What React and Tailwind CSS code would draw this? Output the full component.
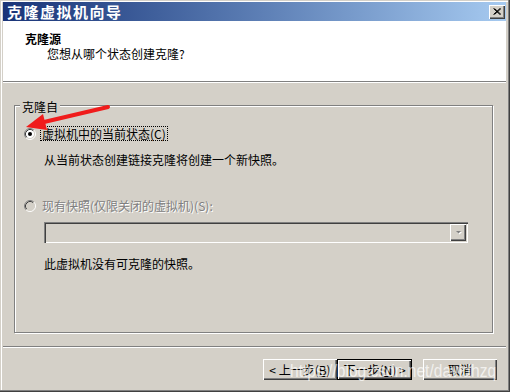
import React from 'react'

const FONT = "font-['Noto_Sans_CJK_SC','Microsoft_YaHei',sans-serif]"

// classic 12px radio button
const Radio = ({ checked, disabled }) => (
    <svg width="12" height="12" viewBox="0 0 12 12" className="shrink-0">
        <circle cx="6" cy="6" r="4.5" fill={disabled ? '#d4d0c8' : '#fff'} />
        <path d="M2.11 9.89 A5.5 5.5 0 0 1 9.89 2.11" stroke="#808080" fill="none" />
        <path d="M9.89 2.11 A5.5 5.5 0 0 1 2.11 9.89" stroke="#fff" fill="none" />
        <path d="M2.82 9.18 A4.5 4.5 0 0 1 9.18 2.82" stroke="#404040" fill="none" />
        <path d="M9.18 2.82 A4.5 4.5 0 0 1 2.82 9.18" stroke="#d4d0c8" fill="none" />
        {checked && <circle cx="6" cy="6" r="2" fill="#000" />}
    </svg>
)

const Btn = ({ children, isDefault, className = '' }) => (
    <div className={`h-[21px] ${isDefault ? 'border border-black' : ''} ${className}`}>
        <div className="flex h-full w-full items-center justify-center bg-[#d4d0c8] text-[12px] leading-[14px] text-black shadow-[inset_1px_1px_0_#fff,inset_-1px_-1px_0_#404040,inset_-2px_-2px_0_#808080]">
            {children}
        </div>
    </div>
)

const Arrow = () => (
    <svg className="pointer-events-none absolute left-0 top-0" width="510" height="392" viewBox="0 0 510 392">
        <line x1="108" y1="107" x2="44" y2="122" stroke="#f01c1c" strokeWidth="4" strokeLinecap="round" />
        <polygon points="26,127 43,114 47,130" fill="#f01c1c" />
    </svg>
)

export default function App() {
    return (
        <div className={`relative flex h-[392px] w-[510px] flex-col overflow-hidden bg-[#d4d0c8] pb-[3px] pl-[3px] pr-[4px] pt-[2px] text-black ${FONT} shadow-[inset_-1px_-1px_0_#404040,inset_-2px_-2px_0_#808080,inset_1px_1px_0_#d4d0c8,inset_2px_2px_0_#fff]`}>
            {/* title bar */}
            <div className="flex h-[19px] shrink-0 items-center justify-between bg-gradient-to-r from-[#1a3478] to-[#a6caf0] pl-[4px] pr-[1px]">
                <span className="text-[15px] font-bold leading-[17px] tracking-[1.5px] text-white">克隆虚拟机向导</span>
                <div className="flex h-[14px] w-[16px] items-center justify-center bg-[#d4d0c8] shadow-[inset_1px_1px_0_#fff,inset_-1px_-1px_0_#404040,inset_-2px_-2px_0_#808080]">
                    <svg width="8" height="7" viewBox="0 0 8 7">
                        <path d="M0.5 0.5 L7 6.5 M1.5 0.5 L8 6.5 M7 0.5 L0.5 6.5 M8 0.5 L1.5 6.5" stroke="#000" strokeWidth="1" />
                    </svg>
                </div>
            </div>

            {/* header */}
            <div className="h-[60px] shrink-0 bg-white pt-[11px] text-[12px] leading-[14px]">
                <div className="pl-[22px] font-bold">克隆源</div>
                <div className="mt-[1px] pl-[44px]">您想从哪个状态创建克隆?</div>
            </div>
            <div className="h-[2px] shrink-0 border-b border-t border-b-white border-t-[#808080]" />

            {/* body */}
            <div className="h-[263px] shrink-0 pl-[11px] pt-[22px] text-[12px] leading-[14px]">
                <div className="h-[228px] w-[479px] border border-[#808080] shadow-[inset_1px_1px_0_#fff,1px_1px_0_#fff]">
                    <div className="-mt-[6px] ml-[5px] w-fit bg-[#d4d0c8] px-[2px]">克隆自</div>

                    <div className="ml-[9px] mt-[12px] flex h-[15px] items-center">
                        <Radio checked />
                        <span className="ml-[4px] border border-dotted border-black px-[1px] leading-[13px]">虚拟机中的当前状态(C)</span>
                    </div>
                    <div className="ml-[29px] mt-[12px]">从当前状态创建链接克隆将创建一个新快照。</div>

                    <div className="ml-[9px] mt-[31px] flex h-[15px] items-center">
                        <Radio disabled />
                        <span className="ml-[4px] border border-transparent px-[1px] leading-[13px] text-[#808080] [text-shadow:1px_1px_0_#fff]">现有快照(仅限关闭的虚拟机)(S):</span>
                    </div>

                    <div className="ml-[29px] mt-[9px] flex h-[21px] w-[424px] justify-end bg-[#d4d0c8] p-[2px] shadow-[inset_1px_1px_0_#808080,inset_2px_2px_0_#404040,inset_-1px_-1px_0_#fff,inset_-2px_-2px_0_#d4d0c8]">
                        <div className="flex h-[17px] w-[16px] items-center justify-center bg-[#d4d0c8] shadow-[inset_1px_1px_0_#fff,inset_-1px_-1px_0_#404040,inset_-2px_-2px_0_#808080]">
                            <svg width="7" height="5" viewBox="0 0 7 5">
                                <polygon points="1,1 6,1 3.5,3.5" fill="#fff" transform="translate(1,1)" />
                                <polygon points="1,1 6,1 3.5,3.5" fill="#808080" />
                            </svg>
                        </div>
                    </div>

                    <div className="ml-[29px] mt-[14px]">此虚拟机没有可克隆的快照。</div>
                </div>
            </div>
            <div className="h-[2px] shrink-0 border-b border-t border-b-white border-t-[#808080]" />

            {/* footer */}
            <div className="flex flex-1 items-start justify-end pr-[9px] pt-[11px]">
                <Btn className="w-[74px]">&lt; 上一步(<span className="underline">B</span>)</Btn>
                <Btn isDefault className="w-[75px]">下一步(<span className="underline">N</span>) &gt;</Btn>
                <Btn className="ml-[11px] w-[74px]">取消</Btn>
            </div>

            <Arrow />

            {/* watermark */}
            <div className="pointer-events-none absolute left-[290px] top-[361px] origin-left scale-x-[0.82] whitespace-nowrap font-['Liberation_Sans',Arial,sans-serif] text-[19px] leading-[19px] text-white/70">
                https://blog.csdn.net/davidhzq
            </div>
        </div>
    )
}
